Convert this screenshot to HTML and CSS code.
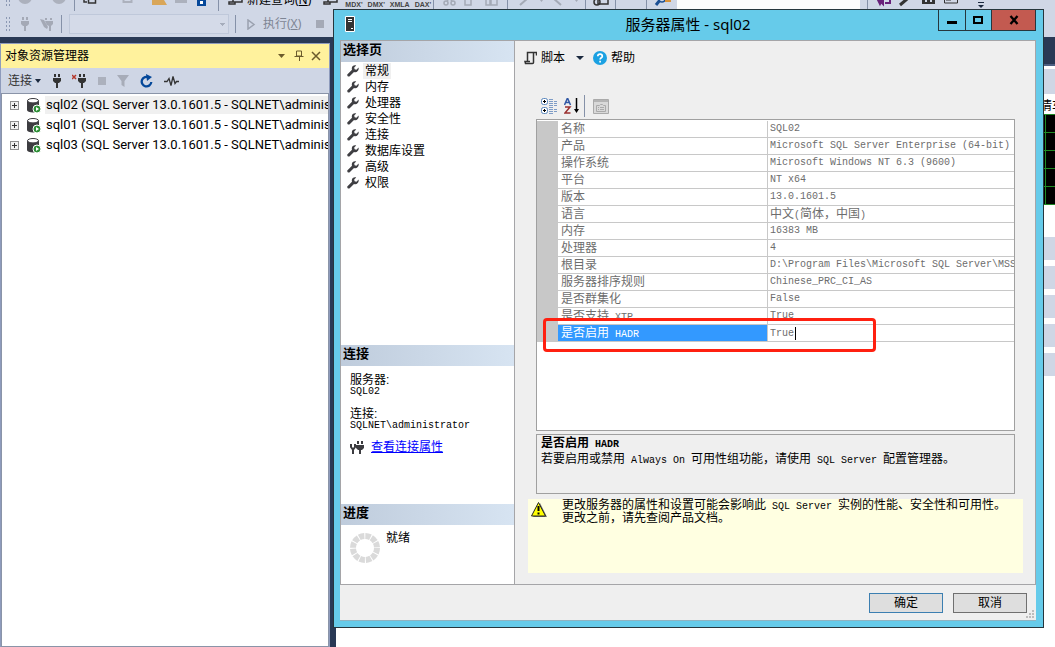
FILE: index.html
```html
<!DOCTYPE html>
<html lang="zh-CN">
<head>
<meta charset="utf-8">
<title>服务器属性 - sql02</title>
<link rel="stylesheet" href="styles.css">
</head>
<body>
<svg class="defs" aria-hidden="true">
  <defs>
    <symbol id="wrench" viewBox="0 0 12 12"><path d="M11.6 2.6 9.4 4.7 7.6 4.3 7.2 2.6 9.2.5C7.300-.2 4.700.900 4.800 3.500c0 .5.1.900.2 1.200L.5 9.200c-1 1.100.8 3.200 2.200 2.100L7 7c2.900 1 5.200-1.500 4.600-4.400z" fill="#3f3f43"/></symbol>
    <symbol id="plug" viewBox="0 0 10 14"><path d="M2 0h2v3H2zM6 0h2v3H6zM1 4h8v3L7 9H6v5H4V9H3L1 7z" fill="currentColor"/></symbol>
    <symbol id="db" viewBox="0 0 14 15"><path d="M0 2.500v9.500c0 1.500 2.500 2.500 6 2.500h2c2 0 4-1 4-2.500V2.500z" fill="#3c3c40"/><ellipse cx="6" cy="2.700" rx="5.500" ry="2.200" fill="#fff" stroke="#3c3c40"/><circle cx="10" cy="11" r="4" fill="#2f8f38" stroke="#fff"/><path d="M9 9v4l3-2z" fill="#fff"/></symbol>
  </defs>
</svg>
<div class="app">
  <header class="bars">
    <div class="bar bar-top">
      <span class="grip"></span>
      <svg class="set-file" width="200" height="24" viewBox="0 0 200 24"><g fill="#acb1bd"><circle cx="14" cy="10" r="7"/><circle cx="48" cy="10" r="7"/><path d="M164 10h12v6h-12z"/></g><path d="M63.500 0v24M206 0v24" stroke="#8591a8"/><path d="M73 8v7h3M77.500 8v8h7V8" fill="none" stroke="#333" stroke-width="1.500"/><path d="M112.500 8v7h8V8" fill="none" stroke="#acb1bd" stroke-width="2"/><path d="M141 18V10l3 3h9l3 5z" fill="#d9a659"/><path d="M186 6h9v13h-9z" fill="#06489a"/><path d="M189 14h3v3h-3z" fill="#fff"/></svg>
      <span class="sep"></span>
      <button class="tool query"><svg width="15" height="24" viewBox="0 0 15 24"><path d="M0 9h5v6H1v2h6v-2H5M7 9h7v6H7M8 12h5" fill="none" stroke="#333" stroke-width="1.500"/></svg><span>新建查询(<u>N</u>)</span></button>
      <svg width="17" height="24" viewBox="0 0 17 24"><path d="M0 9h5v6H1v2h6v-2H5M7 9h7v6H7" fill="none" stroke="#333" stroke-width="1.500"/></svg>
      <div class="langs"><span>MDX'</span><span>DMX'</span><span>XMLA</span><span>DAX'</span></div>
      <span class="sep"></span>
      <svg width="73" height="24" viewBox="0 0 73 24"><g fill="none" stroke="#a4aab6" stroke-width="1.500"><circle cx="12" cy="16" r="2"/><circle cx="19" cy="16" r="2"/><path d="m13 14 5-6M18 14l-5-6M31 9v9h6V9M38 12h4V8M52 9v9h4V9M57 9v9h6V9"/></g></svg>
      <span class="sep"></span>
      <svg width="77" height="24" viewBox="0 0 77 24"><path d="m12 18 8-7M45 11l8 7" stroke="#a4aab6" stroke-width="2"/><path d="M32 13h3l-1.500 2zM67 13h3l-1.500 2z" fill="#a4aab6"/></svg>
      <span class="sep"></span>
      <svg width="29" height="24" viewBox="0 0 29 24"><path d="M12 10v7h10v-7" fill="none" stroke="#333" stroke-width="1.500"/><circle cx="11" cy="15" r="3" fill="none" stroke="#333" stroke-width="1.500"/></svg>
      <span class="sep"></span><span class="blank"></span><span class="sep"></span>
      <svg width="30" height="24" viewBox="0 0 30 24"><path d="m9 18 4-5" stroke="#1b4f93" stroke-width="3"/><circle cx="15" cy="12" r="3" fill="#d0d7e6" stroke="#1b4f93" stroke-width="1.500"/><path d="M18 10h6v5h-6z" fill="#d9923a"/></svg>
      <span class="searchbox"></span>
      <span class="sep"></span>
      <svg class="set-view" width="150" height="24" viewBox="0 0 150 24"><path d="m9 11 3 6 3-6v6l-6-6M17 16h5v-5" fill="none" stroke="#68217a" stroke-width="2"/><path d="m32 18 7-6 3-2" stroke="#333" stroke-width="3"/><path d="M54 9h13v8H54z" fill="#333"/><path d="M57 13h2v2h-2zM62 13h2v2h-2z" fill="#d0d7e6"/><path d="M76.500 9v7h13V9M78 13h5" fill="none" stroke="#333"/><path d="M110 15.500h6" stroke="#1b293e"/><path d="M110 18h6l-3 3z" fill="#1b293e"/></svg>
    </div>
    <div class="bar bar-exec">
      <span class="grip"></span>
      <svg class="dim" width="10" height="14"><use href="#plug"/></svg>
      <svg class="dim plug-edit" width="15" height="14" viewBox="0 0 15 14"><path d="M5 1h2v2H5zM10 1h2v2h-2zM5 4h8v3l-2 2v5H9V9L7 8zM0 2l4 1 4 7-1 2-3-2z" fill="currentColor"/></svg>
      <span class="sep"></span>
      <select class="dbselect" aria-label="数据库" disabled><option></option></select>
      <span class="sep"></span>
      <button class="tool run" disabled><svg width="9" height="11" viewBox="0 0 9 11"><path d="M1 1v9l6-4.500z" fill="none" stroke="#9aa1af" stroke-width="1.500"/></svg><span>执行(<u>X</u>)</span></button>
      <span class="stop"></span>
    </div>
  </header>
  <div class="work">
    <aside class="explorer">
      <div class="ex-title"><h2>对象资源管理器</h2>
        <svg width="46" height="14" viewBox="0 0 46 14"><path d="M2 5h7L5.500 9z" fill="#6b5b2c"/><g fill="none" stroke="#6b5b2c"><path d="M20.500 2v5h5V2zM18.500 7.500h9M23.500 8v4"/><path d="m36 3 8 8M44 3l-8 8" stroke-width="1.500"/></g></svg>
      </div>
      <div class="ex-tools"><button class="tool">连接<i class="caret"></i></button>
        <svg width="10" height="14"><use href="#plug"/></svg>
        <svg width="15" height="14" viewBox="0 0 15 14"><path d="m0 1 4 4M4 1 0 5" stroke="#b5382b" stroke-width="1.500"/><path d="M7 0h2v3H7zM11 0h2v3h-2zM6 4h8v3l-2 2h-1v5H9V9H8L6 7z" fill="#333"/></svg>
        <svg width="8" height="14"><path d="M0 3h8v8H0z" fill="#acb1bd"/></svg>
        <svg width="12" height="14"><path d="M0 1h12L7.500 7v6l-3-2V7z" fill="#a7acb8"/></svg>
        <svg width="13" height="14" viewBox="0 0 13 14"><path d="M9 3.500A4.800 4.800 0 1 0 11.300 8" fill="none" stroke="#05489a" stroke-width="2.300"/><path d="M6 0l6 3-5 4z" fill="#05489a"/></svg>
        <svg width="15" height="14" viewBox="0 0 15 14"><path d="M0 7.500h3l2-3 2 7 2-9 2 7 1.500-2H15" fill="none" stroke="#333" stroke-width="1.300"/></svg>
      </div>
      <ul class="tree">
        <li><i class="plus"></i><svg width="14" height="15"><use href="#db"/></svg><span class="hot">sql02 (SQL Server 13.0.1601.5 - SQLNET\adminis</span></li>
        <li><i class="plus"></i><svg width="14" height="15"><use href="#db"/></svg><span>sql01 (SQL Server 13.0.1601.5 - SQLNET\adminis</span></li>
        <li><i class="plus"></i><svg width="14" height="15"><use href="#db"/></svg><span>sql03 (SQL Server 13.0.1601.5 - SQLNET\adminis</span></li>
      </ul>
    </aside>
    <main class="doc">
      <div class="doc-tabs"></div>
      <div class="doc-head"></div>
      <div class="doc-label"><span>情车</span></div>
      <div class="chart"></div>
      <div class="strips"><i></i><i></i><i></i><i></i><i></i></div>
    </main>
  </div>
</div>

<section class="dialog" role="dialog" aria-labelledby="dlg-title">
  <div class="titlebar">
    <svg class="app-icon" width="10" height="16" viewBox="0 0 10 16"><path d="M.5.500h9v15h-9z" fill="#333" stroke="#fff"/><path d="M3 3.500h4M3 5.500h4M6 12.500h2" stroke="#fff"/></svg>
    <h1 id="dlg-title">服务器属性 - sql02</h1>
    <div class="winbtns">
      <button aria-label="最小化"><svg width="12" height="12"><path d="M1 7h10v3H1z"/></svg></button>
      <button aria-label="最大化"><svg width="10" height="12"><path d="M1 3h8v6H1z" fill="none" stroke="#000" stroke-width="2"/></svg></button>
      <button class="close" aria-label="关闭"><svg width="10" height="12"><path d="m1.500 2 7 8M8.500 2l-7 8" stroke="#000" stroke-width="2.300"/></svg></button>
    </div>
  </div>
  <div class="client">
    <div class="panes">
      <nav class="side">
        <section class="pages">
          <h2>选择页</h2>
          <ul>
            <li><svg width="12" height="12"><use href="#wrench"/></svg><span class="hot">常规</span></li>
            <li><svg width="12" height="12"><use href="#wrench"/></svg><span>内存</span></li>
            <li><svg width="12" height="12"><use href="#wrench"/></svg><span>处理器</span></li>
            <li><svg width="12" height="12"><use href="#wrench"/></svg><span>安全性</span></li>
            <li><svg width="12" height="12"><use href="#wrench"/></svg><span>连接</span></li>
            <li><svg width="12" height="12"><use href="#wrench"/></svg><span>数据库设置</span></li>
            <li><svg width="12" height="12"><use href="#wrench"/></svg><span>高级</span></li>
            <li><svg width="12" height="12"><use href="#wrench"/></svg><span>权限</span></li>
          </ul>
        </section>
        <section class="conn">
          <h2>连接</h2>
          <dl><dt>服务器:</dt><dd>SQL02</dd><dt>连接:</dt><dd>SQLNET\administrator</dd></dl>
          <p><svg width="14" height="13" viewBox="0 0 14 13"><path d="M1 3v3l1.500 2h1L5 6V3M3 8v5" fill="none" stroke="#3c3c40" stroke-width="2"/><path d="M7 0h2v3H7zM11 0h2v3h-2zM6 4h8v3l-2 2h-1v4H9V9H8L6 7z" fill="#3c3c40"/></svg><a href="#">查看连接属性</a></p>
        </section>
        <section class="progress">
          <h2>进度</h2>
          <p><svg width="30" height="30" viewBox="0 0 30 30"><circle cx="15" cy="15" r="12" fill="none" stroke="#dadada" stroke-width="6" stroke-dasharray="5.280 1"/></svg><span>就绪</span></p>
        </section>
      </nav>
      <div class="content">
        <div class="actions">
          <button class="tool"><svg width="13" height="14" viewBox="0 0 13 14"><path d="M3.500 11V1.500h9v3M9.500 2v9.500a1 1 0 0 1-1 1h-7L1 10.500h5" fill="none" stroke="#333" stroke-width="1.500"/></svg><span>脚本</span><i class="caret"></i></button>
          <button class="tool help"><svg width="14" height="14" viewBox="0 0 14 14"><circle cx="7" cy="7" r="7" fill="#1ba1e2"/><path d="M4.800 5.300C4.800 2.400 9.300 2.500 9.300 5.200 9.300 6.800 7.100 6.700 7.100 8.600M7.100 9.800v1.700" fill="none" stroke="#fff" stroke-width="1.700"/></svg><span>帮助</span></button>
        </div>
        <div class="gridtools">
          <svg width="17" height="16" viewBox="0 0 17 16"><g fill="#fff" stroke="#5a87bd"><rect x=".5" y=".5" width="6" height="6" rx="2"/><rect x=".5" y="9.500" width="6" height="6" rx="2"/></g><path d="M2 3.500h3M3.500 2v3M2 12.500h3M3.500 11v3" stroke="#000"/><path d="M8 1.500h4M8 3.500h4M8 5.500h4M8 7.500h4M8 9.500h4M8 11.500h4M8 13.500h4M8 15.500h4M13 3.500h3M13 5.500h3M13 7.500h3M13 11.500h3M13 13.500h3" stroke="#7e9cc6"/></svg>
          <svg width="16" height="16" viewBox="0 0 16 16"><path d="M.500 7 3.500 0l3 7M1.500 4.500h4" fill="none" stroke="#3158a5" stroke-width="1.500"/><path d="M1 9h5l-5 6h5.500" fill="none" stroke="#9b3130" stroke-width="1.500"/><path d="M12.500 0v13" stroke="#000" stroke-width="1.500"/><path d="M10 11h5l-2.500 4z"/></svg>
          <span class="sep"></span>
          <svg width="16" height="15" viewBox="0 0 16 15"><path d="M.5.500h15v14H.5z" fill="#d9d9d9" stroke="#aaa"/><path d="M1 2h14" stroke="#b4b4b4" stroke-width="2"/><path d="M3.500 6.500h3l1-1h2l1 1h2v6h-9zM5 8.500h1M7 8.500h4M5 10.500h1M7 10.500h4" fill="none" stroke="#aaa"/></svg>
        </div>
        <div class="propgrid">
          <table>
            <colgroup><col class="c-gutter"><col class="c-name"><col></colgroup>
            <tbody>
              <tr><td></td><th>名称</th><td class="m">SQL02</td></tr>
              <tr><td></td><th>产品</th><td class="m">Microsoft SQL Server Enterprise (64-bit)</td></tr>
              <tr><td></td><th>操作系统</th><td class="m">Microsoft Windows NT 6.3 (9600)</td></tr>
              <tr><td></td><th>平台</th><td class="m">NT x64</td></tr>
              <tr><td></td><th>版本</th><td class="m">13.0.1601.5</td></tr>
              <tr><td></td><th>语言</th><td>中文<span class="m">(</span>简体，中国<span class="m">)</span></td></tr>
              <tr><td></td><th>内存</th><td class="m">16383 MB</td></tr>
              <tr><td></td><th>处理器</th><td class="m">4</td></tr>
              <tr><td></td><th>根目录</th><td class="m">D:\Program Files\Microsoft SQL Server\MSS</td></tr>
              <tr><td></td><th>服务器排序规则</th><td class="m">Chinese_PRC_CI_AS</td></tr>
              <tr><td></td><th>是否群集化</th><td class="m">False</td></tr>
              <tr><td></td><th>是否支持<span class="m"> XTP</span></th><td class="m">True</td></tr>
              <tr class="selected"><td></td><th id="hadr">是否启用<span class="m"> HADR</span></th><td class="m"><input aria-labelledby="hadr" value="True" readonly></td></tr>
            </tbody>
          </table>
          <div class="marker"></div>
        </div>
        <div class="desc"><h3>是否启用<span class="m"> HADR</span></h3><p>若要启用或禁用<span class="m"> Always On </span>可用性组功能，请使用<span class="m"> SQL Server </span>配置管理器。</p></div>
        <div class="warn">
          <svg width="16" height="16" viewBox="0 0 16 16"><path d="m9 1 7 14H2" fill="#777"/><path d="M7.500.500 14.500 14H.5z" fill="#ff0" stroke="#222"/><path d="M7.500 4v5M7.500 10.500v2" stroke="#000" stroke-width="2"/></svg>
          <p>更改服务器的属性和设置可能会影响此<span class="m"> SQL Server </span>实例的性能、安全性和可用性。<br>更改之前，请先查阅产品文档。</p>
        </div>
      </div>
    </div>
    <footer class="buttons"><button class="btn default">确定</button><button class="btn">取消</button>
      <svg class="resize" width="8" height="8" viewBox="0 0 8 8"><path d="M6 0h2v2H6zM3 3h2v2H3zM6 3h2v2H6zM0 6h2v2H0zM3 6h2v2H3zM6 6h2v2H6z" fill="#bdbdbd"/></svg>
    </footer>
  </div>
</section>
</body>
</html>
```
FILE: styles.css
```css
* { box-sizing: border-box; }
body {
  margin: 0;
  height: 100vh;
  overflow: hidden;
  font: 12px/16px "Liberation Sans", "Noto Sans CJK SC", sans-serif;
  color: #000;
}
h1, h2, h3, p, ul, dl, dd { margin: 0; padding: 0; font-size: inherit; }
ul { list-style: none; }
svg { display: block; flex: none; }
button { font: inherit; color: inherit; }
.defs { position: absolute; width: 0; height: 0; }
.m { font-family: "Liberation Mono", "Noto Sans CJK SC", monospace; font-size: 10px; white-space: pre; }
.sep { width: 1px; height: 18px; background: #8591a8; flex: none; }
.tool { display: flex; align-items: center; padding: 0; border: 0; background: none; white-space: nowrap; }
.caret { border: 3px solid transparent; border-top: 4px solid #1b293e; border-bottom: 0; margin-left: 3px; }

/* main window */
.app { display: flex; flex-direction: column; height: 100vh; background: #293955; font-family: "Noto Sans", "Noto Sans CJK SC", sans-serif; }
.bars { background: #d0d7e6; overflow: hidden; flex: none; }
.bar { display: flex; align-items: center; padding-left: 5px; }
.bar-top { height: 24px; margin-top: -13px; }
.bar-top .sep { height: 24px; }
.bar-exec { height: 26px; }
.grip { width: 6px; height: 16px; flex: none; background: radial-gradient(circle, #8b98b3 1px, transparent 1px) 0 0 / 3px 4px; }
.set-file { margin-right: 7px; }
.query { margin: 0 12px 0 9px; gap: 4px; }
.query span { padding-top: 2px; }
.langs { display: flex; gap: 5px; width: 93px; padding: 11px 0 0 5px; font: bold 7px/8px "Liberation Sans", sans-serif; color: #444; }
.blank { width: 30px; flex: none; }
.searchbox { width: 183px; height: 24px; margin-right: 7px; background: #fcfcfc; flex: none; }
.dim { color: #a4a9b6; margin-left: 9px; }
.plug-edit { margin: 0 6px 0 10px; }
.dbselect {
  appearance: none; width: 160px; height: 20px; margin: 0 6px 0 7px; border: 1px solid #b9c2d6; flex: none;
  background:
    linear-gradient(#959cab, #959cab) 150px 8px / 5px 1px no-repeat,
    linear-gradient(#959cab, #959cab) 151px 9px / 3px 1px no-repeat,
    linear-gradient(#959cab, #959cab) 152px 10px / 1px 1px no-repeat #d6dce9;
}
.run { margin: 0 15px 0 11px; gap: 7px; color: #7e8594; }
.stop { width: 8px; height: 8px; background: #a4a9b6; }

.work { display: flex; flex: 1; min-height: 0; gap: 6px; }
.explorer { display: flex; flex-direction: column; width: 330px; flex: none; margin-top: 6px; border: 1px solid #8e9bbc; border-bottom: 0; background: #cfd6e5; }
.ex-title { display: flex; align-items: center; justify-content: space-between; height: 24px; padding: 0 7px 0 4px; background: #fff29d; }
.ex-title h2 { font-weight: 400; }
.ex-tools { display: flex; align-items: center; height: 25px; padding-left: 7px; gap: 11px; color: #333; }
.ex-tools svg:nth-of-type(2) { margin-left: -1px; }
.tree { flex: 1; background: #fff; border: 1px solid #8a94a8; padding-top: 1px; overflow: hidden; }
.tree li { display: flex; align-items: center; height: 20px; padding-left: 8px; white-space: nowrap; }
.tree svg { margin: 0 4px 0 8px; }
.tree span { padding-left: 1px; font: 13px/18px Roboto, "Noto Sans CJK SC", sans-serif; }
.hot { background: #f0f0f0; }
.plus { width: 9px; height: 9px; flex: none; border: 1px solid #919191; background: linear-gradient(#333, #333) 1px 3px / 5px 1px no-repeat, linear-gradient(#333, #333) 3px 1px / 1px 5px no-repeat #f2f2f2; }
.doc { flex: 1; background: #fff; overflow: hidden; }
.doc-tabs { height: 29px; background: #293955; border-bottom: 2px solid #4d6082; }
.doc-head { height: 25px; margin-top: 3px; background: #cfd6e5; }
.doc-label { display: flex; justify-content: flex-end; height: 20px; padding-top: 4px; }
.doc-label span { margin-right: -9px; }
.chart { height: 91px; background: linear-gradient(#1f8a24, #1f8a24) right 9px top 0 / 1px 100% no-repeat, repeating-linear-gradient(#1f8a24 0 1px, transparent 1px 18px) #000; }
.strips { display: grid; gap: 6px; padding-top: 32px; }
.strips i { height: 23px; background: #cfd6e5; }

/* properties dialog */
.dialog { position: absolute; inset: 9px 11px 19px 333px; display: flex; flex-direction: column; padding: 0 7px 6px 6px; border: 1px solid #26363d; background: #66cbea; }
.titlebar { display: grid; grid-template-columns: 98px 1fr 98px; height: 30px; flex: none; }
.app-icon { margin: 6px 0 0 5px; }
.titlebar h1 { text-align: center; font: 15px/29px "Noto Sans", "Noto Sans CJK SC", sans-serif; }
.winbtns { display: flex; justify-content: flex-end; height: 21px; }
.winbtns button { display: flex; align-items: center; justify-content: center; width: 28px; padding: 0; border: 1px solid #26363d; border-width: 0 0 1px 1px; background: none; }
.winbtns .close { width: 47px; border-right-width: 1px; background: #c35a50; }
.client { display: flex; flex-direction: column; flex: 1; min-height: 0; background: #efefef; border-bottom: 1px solid #8fb3c1; }
.panes { display: flex; flex: 1; min-height: 0; border: 1px solid #a5a5a8; }
.side { display: flex; flex-direction: column; width: 174px; flex: none; background: #fff; border-right: 1px solid #a5a5a8; }
.side h2 { height: 21px; padding-left: 2px; font-size: 13px; line-height: 18px; background: linear-gradient(90deg, #bfccdc, #d7e4f2); }
.pages { flex: 1; }
.pages ul { padding-top: 1px; }
.pages li { display: flex; align-items: center; height: 16px; padding-left: 6px; gap: 4px; }
.pages span { padding: 0 2px; }
.conn { height: 159px; }
.conn dl { padding: 8px 0 0 9px; line-height: 12px; }
.conn dd { margin-bottom: 10px; font: 10px/12px "Liberation Mono", monospace; }
.conn p { display: flex; align-items: center; gap: 7px; padding-left: 9px; margin-top: -3px; }
.conn a { color: #00f; }
.progress { height: 80px; }
.progress p { display: flex; gap: 6px; padding: 5px 0 0 9px; }
.progress svg { margin-top: 3px; }
.content { display: flex; flex-direction: column; flex: 1; min-width: 0; padding: 0 12px 11px 13px; }
.actions { display: flex; align-items: center; height: 33px; margin-left: -4px; }
.actions .tool { gap: 4px; }
.actions .caret { border-width: 4px 4px 0; margin-left: 7px; margin-right: 9px; }
.gridtools { display: flex; align-items: center; gap: 6px; height: 22px; margin: 21px 0 2px 13px; }
.gridtools .sep { height: 22px; margin-right: 2px; margin-left: -2px; }
.propgrid, .desc { margin: 0 8px; border: 1px solid #a0a0a0; }
.propgrid { position: relative; flex: 1; min-height: 0; background: #fff; }
table { width: 100%; table-layout: fixed; border-collapse: separate; border-spacing: 0; margin-top: 1px; color: #6d6d6d; }
.c-gutter { width: 21px; }
.c-name { width: 210px; }
td, th { height: 17px; padding: 0 2px; border-bottom: 1px solid #c8c8c8; line-height: 16px; font-weight: 400; text-align: left; overflow: hidden; white-space: nowrap; }
th { border-right: 1px solid #c8c8c8; padding-left: 3px; }
td:first-child { background: #c8c8c8; }
th .m, td .m { line-height: 12px; }
.selected th { background: #3399ff; color: #fff; }
.selected input { display: block; width: 26px; height: 13px; padding: 0; border: 0; border-right: 1px solid #000; font: inherit; line-height: 13px; color: inherit; outline: 0; }
.marker { position: absolute; left: 6px; top: 198px; width: 333px; height: 34px; border: 3px solid #ff2010; border-radius: 4px; }
.desc { height: 60px; margin-top: 3px; padding-left: 4px; }
.warn { display: flex; gap: 15px; height: 74px; margin-top: 5px; padding-left: 3px; background: #ffffe1; }
.warn svg { margin-top: 3px; }
.warn p { line-height: 12px; white-space: nowrap; }
.warn .m, .desc .m { line-height: 10px; }
.buttons { position: relative; display: flex; justify-content: flex-end; align-items: center; gap: 10px; height: 35px; padding-right: 9px; }
.btn { width: 74px; height: 20px; padding: 0; border: 1px solid #707070; background: #dedede; line-height: 16px; }
.default { border-color: #3c7fb1; }
.resize { position: absolute; right: 2px; bottom: 2px; }
```
